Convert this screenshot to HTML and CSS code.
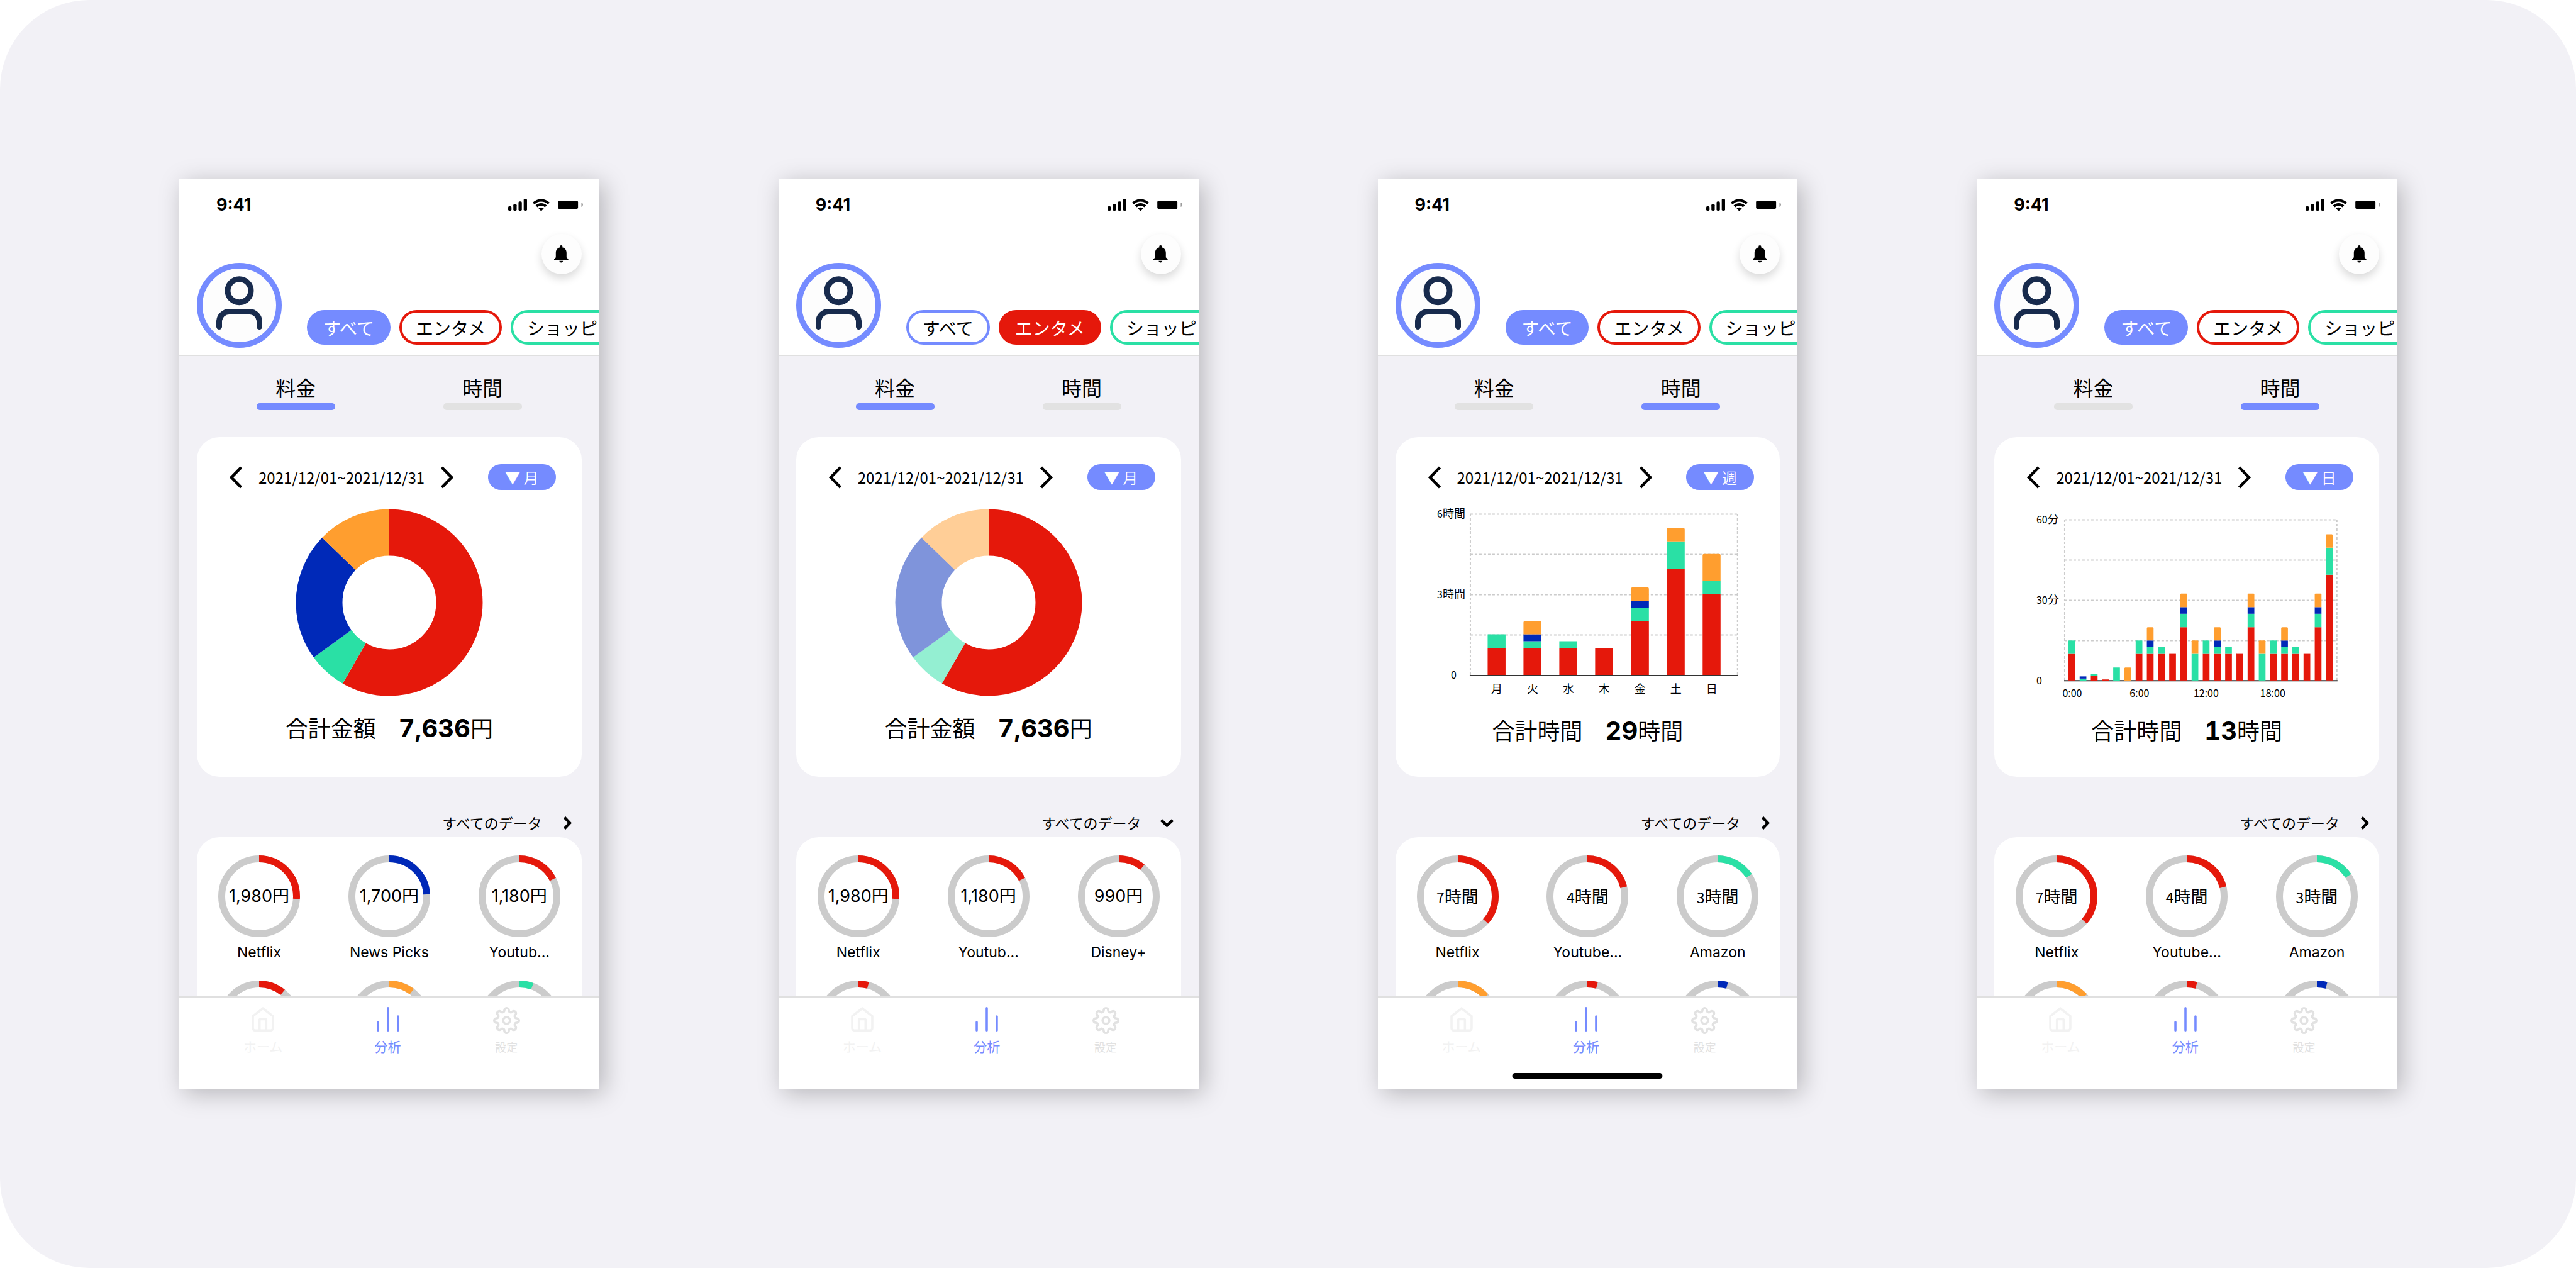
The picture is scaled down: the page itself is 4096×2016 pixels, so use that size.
FILE: index.html
```html
<!DOCTYPE html>
<html lang="ja">
<head>
<meta charset="utf-8">
<meta name="viewport" content="width=device-width, initial-scale=1">
<title>分析</title>
<link rel="stylesheet" href="styles.css">
</head>
<body>
<svg class="sprite" aria-hidden="true">
  <symbol id="signal" viewBox="0 0 153 97"><rect y="61" width="27" height="36" rx="9"/><rect x="42" y="43" width="27" height="54" rx="9"/><rect x="84" y="22" width="27" height="75" rx="9"/><rect x="126" width="27" height="97" rx="9"/></symbol>
  <symbol id="wifi" viewBox="-69 -98 138 99"><path d="M-61.5-61.5A87 87 0 0 1 61.5-61.5M-38-38A54 54 0 0 1 38-38" fill="none" stroke="currentColor" stroke-width="21"/><path d="M0 1-21-20A29 29 0 0 1 21-20Z"/></symbol>
  <symbol id="battery" viewBox="0 0 201 66"><rect width="162" height="66" rx="13"/><path d="M189 15a19 19 0 0 1 0 36z" fill="#9c9c9c"/></symbol>
  <symbol id="bell" viewBox="0 0 23 28"><circle cx="11.3" cy="2.3" r="2.2"/><path d="M11.3 3C6.500 3 2.800 6.700 2.800 12v7.200L0 22v1.200h22.600V22l-2.800-2.800V12c0-5.300-3.700-9-8.500-9zM8.400 24.700h5.800c-.3 1.700-1.500 2.800-2.900 2.800s-2.600-1.100-2.900-2.800z"/></symbol>
  <symbol id="person" viewBox="0 0 135 135"><circle cx="67.5" cy="67.5" r="63" fill="#fdfdfd" stroke="#758bff" stroke-width="9"/><g fill="none" stroke="#182b4d" stroke-width="9" stroke-linecap="round"><circle cx="67.5" cy="44.200" r="18.500"/><path d="M35.500 101.500v-8a16 16 0 0 1 16-16h32a16 16 0 0 1 16 16v8"/></g></symbol>
  <symbol id="prev" viewBox="0 0 20 36"><path d="M18.500 2 3 18l15.500 16" fill="none" stroke="currentColor" stroke-width="4.500"/></symbol>
  <symbol id="next" viewBox="0 0 20 36"><path d="M1.500 2 17 18 1.500 34" fill="none" stroke="currentColor" stroke-width="4.500"/></symbol>
  <symbol id="more" viewBox="0 0 21 21"><path d="m5.500 1.500 8.500 9-8.500 9" fill="none" stroke="currentColor" stroke-width="4.500"/></symbol>
  <symbol id="less" viewBox="0 0 21 21"><path d="m1.500 6 9 8.500 9-8.500" fill="none" stroke="currentColor" stroke-width="4.500"/></symbol>
  <symbol id="home" viewBox="0 0 20 22"><path d="M1 8.200 10 1.300l9 6.900V19a2 2 0 0 1-2 2H3a2 2 0 0 1-2-2zM7 21v-9.500a.5.5 0 0 1 .5-.5h5a.5.5 0 0 1 .5.5V21" fill="none" stroke="currentColor" stroke-width="2"/></symbol>
  <symbol id="stats" viewBox="0 0 20 22"><path d="M1 13.500V21M10 1v20M19 8.500V21" fill="none" stroke="currentColor" stroke-width="2" stroke-linecap="round"/></symbol>
  <symbol id="gear" viewBox="-12 -12 24 24"><g fill="none" stroke="currentColor" stroke-width="2"><circle r="3"/><path d="M-2-9A2 2 0 0 1 2-9A1.700 1.700 0 0 0 4.950-7.780A2 2 0 0 1 7.780-4.950A1.700 1.700 0 0 0 9-2A2 2 0 0 1 9 2A1.700 1.700 0 0 0 7.780 4.950A2 2 0 0 1 4.950 7.780A1.700 1.700 0 0 0 2 9A2 2 0 0 1-2 9A1.700 1.700 0 0 0-4.950 7.780A2 2 0 0 1-7.780 4.950A1.700 1.700 0 0 0-9 2A2 2 0 0 1-9-2A1.700 1.700 0 0 0-7.780-4.950A2 2 0 0 1-4.950-7.780A1.700 1.700 0 0 0-2-9z"/></g></symbol>
</svg>

<main class="board">

  <article class="phone">
    <header class="header">
      <div class="status"><time>9:41</time><span class="status-icons"><svg class="i-signal"><use href="#signal"/></svg><svg class="i-wifi"><use href="#wifi"/></svg><svg class="i-battery"><use href="#battery"/></svg></span></div>
      <div class="profile">
        <svg class="avatar" role="img" aria-label="プロフィール"><use href="#person"/></svg>
        <button class="bell" aria-label="通知"><svg><use href="#bell"/></svg></button>
        <div class="chips"><button class="chip blue on">すべて</button><button class="chip red">エンタメ</button><button class="chip green">ショッピング</button></div>
      </div>
    </header>
    <div class="tabs"><button class="tab active">料金</button><button class="tab">時間</button></div>
    <section class="card">
      <div class="range"><button class="arrow" aria-label="前へ"><svg><use href="#prev"/></svg></button><span class="dates">2021/12/01~2021/12/31</span><button class="arrow" aria-label="次へ"><svg><use href="#next"/></svg></button><select class="period" aria-label="期間"><option>▼ 月</option></select></div>
      <svg class="donut" viewBox="0 0 298 298" role="img" aria-label="料金の内訳">
        <g class="arcs"><circle class="s-red" cx="149" cy="149" r="111.500" pathLength="360" stroke-dasharray="210 360"/><circle class="s-green" cx="149" cy="149" r="111.500" pathLength="360" stroke-dasharray="24 360" stroke-dashoffset="-210"/><circle class="s-blue" cx="149" cy="149" r="111.500" pathLength="360" stroke-dasharray="80 360" stroke-dashoffset="-234"/><circle class="s-orange" cx="149" cy="149" r="111.500" pathLength="360" stroke-dasharray="46 360" stroke-dashoffset="-314"/></g>
      </svg>
      <p class="total"><span>合計金額　</span><b>7,636</b>円</p>
    </section>
    <button class="all">すべてのデータ<svg><use href="#more"/></svg></button>
    <div class="scroll">
      <ul class="services">
        <li><div class="ring"><svg viewBox="0 0 130 130"><circle cx="65" cy="65" r="59.500"/><circle class="s-red" cx="65" cy="65" r="59.500" pathLength="360" stroke-dasharray="94 360"/></svg><span class="yen">1,980円</span></div><span class="name">Netflix</span></li>
        <li><div class="ring"><svg viewBox="0 0 130 130"><circle cx="65" cy="65" r="59.500"/><circle class="s-blue" cx="65" cy="65" r="59.500" pathLength="360" stroke-dasharray="87 360"/></svg><span class="yen">1,700円</span></div><span class="name">News Picks</span></li>
        <li><div class="ring"><svg viewBox="0 0 130 130"><circle cx="65" cy="65" r="59.500"/><circle class="s-red" cx="65" cy="65" r="59.500" pathLength="360" stroke-dasharray="63 360"/></svg><span class="yen">1,180円</span></div><span class="name">Youtub...</span></li>
        <li><div class="ring"><svg viewBox="0 0 130 130"><circle cx="65" cy="65" r="59.500"/><circle class="s-red" cx="65" cy="65" r="59.500" pathLength="360" stroke-dasharray="39 360"/></svg></div></li>
        <li><div class="ring"><svg viewBox="0 0 130 130"><circle cx="65" cy="65" r="59.500"/><circle class="s-orange" cx="65" cy="65" r="59.500" pathLength="360" stroke-dasharray="37 360"/></svg></div></li>
        <li><div class="ring"><svg viewBox="0 0 130 130"><circle cx="65" cy="65" r="59.500"/><circle class="s-green" cx="65" cy="65" r="59.500" pathLength="360" stroke-dasharray="20 360"/></svg></div></li>
      </ul>
    </div>
    <nav class="nav"><a class="n-home" href="#home"><svg><use href="#home"/></svg>ホーム</a><a class="n-stats" href="#stats"><svg><use href="#stats"/></svg>分析</a><a class="n-gear" href="#gear"><svg><use href="#gear"/></svg>設定</a></nav>
  </article>

  <article class="phone">
    <header class="header">
      <div class="status"><time>9:41</time><span class="status-icons"><svg class="i-signal"><use href="#signal"/></svg><svg class="i-wifi"><use href="#wifi"/></svg><svg class="i-battery"><use href="#battery"/></svg></span></div>
      <div class="profile">
        <svg class="avatar" role="img" aria-label="プロフィール"><use href="#person"/></svg>
        <button class="bell" aria-label="通知"><svg><use href="#bell"/></svg></button>
        <div class="chips"><button class="chip blue">すべて</button><button class="chip red on">エンタメ</button><button class="chip green">ショッピング</button></div>
      </div>
    </header>
    <div class="tabs"><button class="tab active">料金</button><button class="tab">時間</button></div>
    <section class="card">
      <div class="range"><button class="arrow" aria-label="前へ"><svg><use href="#prev"/></svg></button><span class="dates">2021/12/01~2021/12/31</span><button class="arrow" aria-label="次へ"><svg><use href="#next"/></svg></button><select class="period" aria-label="期間"><option>▼ 月</option></select></div>
      <svg class="donut" viewBox="0 0 298 298" role="img" aria-label="料金の内訳">
        <g class="arcs"><circle class="s-red" cx="149" cy="149" r="111.500" pathLength="360" stroke-dasharray="210 360"/><circle class="s-green faded" cx="149" cy="149" r="111.500" pathLength="360" stroke-dasharray="24 360" stroke-dashoffset="-210"/><circle class="s-blue faded" cx="149" cy="149" r="111.500" pathLength="360" stroke-dasharray="80 360" stroke-dashoffset="-234"/><circle class="s-orange faded" cx="149" cy="149" r="111.500" pathLength="360" stroke-dasharray="46 360" stroke-dashoffset="-314"/></g>
      </svg>
      <p class="total"><span>合計金額　</span><b>7,636</b>円</p>
    </section>
    <button class="all">すべてのデータ<svg><use href="#less"/></svg></button>
    <div class="scroll">
      <ul class="services">
        <li><div class="ring"><svg viewBox="0 0 130 130"><circle cx="65" cy="65" r="59.500"/><circle class="s-red" cx="65" cy="65" r="59.500" pathLength="360" stroke-dasharray="94 360"/></svg><span class="yen">1,980円</span></div><span class="name">Netflix</span></li>
        <li><div class="ring"><svg viewBox="0 0 130 130"><circle cx="65" cy="65" r="59.500"/><circle class="s-red" cx="65" cy="65" r="59.500" pathLength="360" stroke-dasharray="63 360"/></svg><span class="yen">1,180円</span></div><span class="name">Youtub...</span></li>
        <li><div class="ring"><svg viewBox="0 0 130 130"><circle cx="65" cy="65" r="59.500"/><circle class="s-red" cx="65" cy="65" r="59.500" pathLength="360" stroke-dasharray="39 360"/></svg><span class="yen">990円</span></div><span class="name">Disney+</span></li>
        <li><div class="ring"><svg viewBox="0 0 130 130"><circle cx="65" cy="65" r="59.500"/><circle class="s-red" cx="65" cy="65" r="59.500" pathLength="360" stroke-dasharray="15 360"/></svg></div></li>
      </ul>
    </div>
    <nav class="nav"><a class="n-home" href="#home"><svg><use href="#home"/></svg>ホーム</a><a class="n-stats" href="#stats"><svg><use href="#stats"/></svg>分析</a><a class="n-gear" href="#gear"><svg><use href="#gear"/></svg>設定</a></nav>
  </article>

  <article class="phone">
    <header class="header">
      <div class="status"><time>9:41</time><span class="status-icons"><svg class="i-signal"><use href="#signal"/></svg><svg class="i-wifi"><use href="#wifi"/></svg><svg class="i-battery"><use href="#battery"/></svg></span></div>
      <div class="profile">
        <svg class="avatar" role="img" aria-label="プロフィール"><use href="#person"/></svg>
        <button class="bell" aria-label="通知"><svg><use href="#bell"/></svg></button>
        <div class="chips"><button class="chip blue on">すべて</button><button class="chip red">エンタメ</button><button class="chip green">ショッピング</button></div>
      </div>
    </header>
    <div class="tabs"><button class="tab">料金</button><button class="tab active">時間</button></div>
    <section class="card">
      <div class="range"><button class="arrow" aria-label="前へ"><svg><use href="#prev"/></svg></button><span class="dates">2021/12/01~2021/12/31</span><button class="arrow" aria-label="次へ"><svg><use href="#next"/></svg></button><select class="period" aria-label="期間"><option>▼ 週</option></select></div>
      <svg class="bars" viewBox="0 0 612 310" role="img" aria-label="曜日ごとの利用時間">
        <path class="grid" d="M119 16.500H544M119 80.500H544M119 144.500H544M119 208.500H544M119 16V272M544 16V272"/>
        <path class="axis" d="M118 273H545"/>
        <path class="f-red" d="M146.500 229H175V272H146.500zM203.500 229H232V272H203.500zM260.500 229H289V272H260.500zM317.500 229H346V272H317.500zM374.500 186.500H403V272H374.500zM431.500 103H460V272H431.500zM488.500 144H517V272H488.500z"/>
        <path class="f-green" d="M146.500 207.600H175V229H146.500zM203.500 218.500H232V229H203.500zM260.500 218.500H289V229H260.500zM374.500 165H403V186.500H374.500zM431.500 59.700H460V103H431.500zM488.500 122.600H517V144H488.500z"/>
        <path class="f-blue" d="M203.500 207.600H232V218.500H203.500zM374.500 154.500H403V165H374.500z"/>
        <path class="f-orange" d="M203.500 207.600V188.500q0-2 2-2H230q2 0 2 2V207.600zM374.500 154.500V135q0-2 2-2H401q2 0 2 2V154.500zM431.500 59.700V40.500q0-2 2-2H458q2 0 2 2V59.700zM488.500 122.600V81.700q0-2 2-2H515q2 0 2 2V122.600z"/>
        <g text-anchor="end"><text x="111" y="22">6<tspan class="kanji">時間</tspan></text><text x="111" y="150">3<tspan class="kanji">時間</tspan></text><text x="97" y="278">0</text></g>
        <g class="kanji" text-anchor="middle"><text x="161" y="301">月</text><text x="218" y="301">火</text><text x="275" y="301">水</text><text x="332" y="301">木</text><text x="389" y="301">金</text><text x="446" y="301">土</text><text x="503" y="301">日</text></g>
      </svg>
      <p class="total">合計時間　<b>29</b>時間</p>
    </section>
    <button class="all">すべてのデータ<svg><use href="#more"/></svg></button>
    <div class="scroll">
      <ul class="services">
        <li><div class="ring"><svg viewBox="0 0 130 130"><circle cx="65" cy="65" r="59.500"/><circle class="s-red" cx="65" cy="65" r="59.500" pathLength="360" stroke-dasharray="132 360"/></svg><span class="hours">7<span>時間</span></span></div><span class="name">Netflix</span></li>
        <li><div class="ring"><svg viewBox="0 0 130 130"><circle cx="65" cy="65" r="59.500"/><circle class="s-red" cx="65" cy="65" r="59.500" pathLength="360" stroke-dasharray="76 360"/></svg><span class="hours">4<span>時間</span></span></div><span class="name">Youtube...</span></li>
        <li><div class="ring"><svg viewBox="0 0 130 130"><circle cx="65" cy="65" r="59.500"/><circle class="s-green" cx="65" cy="65" r="59.500" pathLength="360" stroke-dasharray="57 360"/></svg><span class="hours">3<span>時間</span></span></div><span class="name">Amazon</span></li>
        <li><div class="ring"><svg viewBox="0 0 130 130"><circle cx="65" cy="65" r="59.500"/><circle class="s-orange" cx="65" cy="65" r="59.500" pathLength="360" stroke-dasharray="48 360"/></svg></div></li>
        <li><div class="ring"><svg viewBox="0 0 130 130"><circle cx="65" cy="65" r="59.500"/><circle class="s-red" cx="65" cy="65" r="59.500" pathLength="360" stroke-dasharray="15 360"/></svg></div></li>
        <li><div class="ring"><svg viewBox="0 0 130 130"><circle cx="65" cy="65" r="59.500"/><circle class="s-blue" cx="65" cy="65" r="59.500" pathLength="360" stroke-dasharray="15 360"/></svg></div></li>
      </ul>
    </div>
    <nav class="nav"><a class="n-home" href="#home"><svg><use href="#home"/></svg>ホーム</a><a class="n-stats" href="#stats"><svg><use href="#stats"/></svg>分析</a><a class="n-gear" href="#gear"><svg><use href="#gear"/></svg>設定</a></nav>
    <span class="indicator"></span>
  </article>

  <article class="phone">
    <header class="header">
      <div class="status"><time>9:41</time><span class="status-icons"><svg class="i-signal"><use href="#signal"/></svg><svg class="i-wifi"><use href="#wifi"/></svg><svg class="i-battery"><use href="#battery"/></svg></span></div>
      <div class="profile">
        <svg class="avatar" role="img" aria-label="プロフィール"><use href="#person"/></svg>
        <button class="bell" aria-label="通知"><svg><use href="#bell"/></svg></button>
        <div class="chips"><button class="chip blue on">すべて</button><button class="chip red">エンタメ</button><button class="chip green">ショッピング</button></div>
      </div>
    </header>
    <div class="tabs"><button class="tab">料金</button><button class="tab active">時間</button></div>
    <section class="card">
      <div class="range"><button class="arrow" aria-label="前へ"><svg><use href="#prev"/></svg></button><span class="dates">2021/12/01~2021/12/31</span><button class="arrow" aria-label="次へ"><svg><use href="#next"/></svg></button><select class="period" aria-label="期間"><option>▼ 日</option></select></div>
      <svg class="bars" viewBox="0 0 612 310" role="img" aria-label="時刻ごとの利用時間">
        <defs>
          <g id="h2"><path class="f-red" d="M0 238.700h10.700V281H0z"/><path class="f-green" d="M0 217.400h10.700v21.300H0z"/></g>
          <g id="h4"><path class="f-red" d="M0 238.700h10.700V281H0z"/><path class="f-green" d="M0 228h10.700v10.700H0z"/><path class="f-blue" d="M0 217.400h10.700V228H0z"/><path class="f-orange" d="M0 217.400V197.300l1-1h8.700l1 1v20.100z"/></g>
          <g id="h3"><path class="f-red" d="M0 238.700h10.700V281H0z"/><path class="f-green" d="M0 228h10.700v10.700H0z"/></g>
          <g id="h1"><path class="f-red" d="M0 238.700h10.700V281H0z"/></g>
          <g id="h5"><path class="f-red" d="M0 196.300h10.700V281H0z"/><path class="f-green" d="M0 174.900h10.700v21.400H0z"/><path class="f-blue" d="M0 164.400h10.700v10.500H0z"/><path class="f-orange" d="M0 164.400V143.900l1-1h8.700l1 1v20.500z"/></g>
          <g id="h6"><path class="f-green" d="M0 238.700h10.700V281H0z"/><path class="f-orange" d="M0 238.700V218.400l1-1h8.700l1 1v20.300z"/></g>
        </defs>
        <path class="grid" d="M112 25.500H545M112 89.500H545M112 153.500H545M112 217.500H545M112 25V281M545 25V281"/>
        <path class="axis" d="M111 281.500H546"/>
        <use href="#h2" x="118"/>
        <path class="f-green" d="M135.800 278h10.700v3.500h-10.700z"/><path class="f-blue" d="M135.800 274.500h10.700v3.500h-10.700z"/>
        <path class="f-red" d="M153.600 273.400h10.700v8h-10.700zM171.400 279.500h10.700v2h-10.700z"/><path class="f-green" d="M153.600 271.200h10.700v2.200h-10.700zM189.200 260.300h10.700v21h-10.700z"/>
        <path class="f-orange" d="M207 281.300V261.300l1-1h8.700l1 1v20z"/>
        <use href="#h2" x="224.900"/><use href="#h4" x="242.700"/><use href="#h3" x="260.500"/><use href="#h1" x="278.300"/><use href="#h5" x="296.100"/><use href="#h6" x="313.900"/>
        <use href="#h2" x="331.700"/><use href="#h4" x="349.500"/><use href="#h3" x="367.300"/><use href="#h1" x="385.200"/><use href="#h5" x="403"/><use href="#h6" x="420.800"/>
        <use href="#h2" x="438.600"/><use href="#h4" x="456.400"/><use href="#h3" x="474.200"/><use href="#h1" x="492"/><use href="#h5" x="509.800"/>
        <path class="f-red" d="M527.600 112.800h10.700V281h-10.700z"/><path class="f-green" d="M527.600 69.900h10.700v42.900h-10.700z"/><path class="f-orange" d="M527.600 69.900V49.400l1-1h8.700l1 1v20.500z"/>
        <text x="67" y="31">60<tspan class="kanji">分</tspan></text><text x="67" y="159">30<tspan class="kanji">分</tspan></text><text x="67" y="287">0</text>
        <g text-anchor="middle"><text x="124" y="307">0:00</text><text x="231" y="307">6:00</text><text x="337" y="307">12:00</text><text x="443" y="307">18:00</text></g>
      </svg>
      <p class="total">合計時間　<b>13</b>時間</p>
    </section>
    <button class="all">すべてのデータ<svg><use href="#more"/></svg></button>
    <div class="scroll">
      <ul class="services">
        <li><div class="ring"><svg viewBox="0 0 130 130"><circle cx="65" cy="65" r="59.500"/><circle class="s-red" cx="65" cy="65" r="59.500" pathLength="360" stroke-dasharray="132 360"/></svg><span class="hours">7<span>時間</span></span></div><span class="name">Netflix</span></li>
        <li><div class="ring"><svg viewBox="0 0 130 130"><circle cx="65" cy="65" r="59.500"/><circle class="s-red" cx="65" cy="65" r="59.500" pathLength="360" stroke-dasharray="76 360"/></svg><span class="hours">4<span>時間</span></span></div><span class="name">Youtube...</span></li>
        <li><div class="ring"><svg viewBox="0 0 130 130"><circle cx="65" cy="65" r="59.500"/><circle class="s-green" cx="65" cy="65" r="59.500" pathLength="360" stroke-dasharray="57 360"/></svg><span class="hours">3<span>時間</span></span></div><span class="name">Amazon</span></li>
        <li><div class="ring"><svg viewBox="0 0 130 130"><circle cx="65" cy="65" r="59.500"/><circle class="s-orange" cx="65" cy="65" r="59.500" pathLength="360" stroke-dasharray="48 360"/></svg></div></li>
        <li><div class="ring"><svg viewBox="0 0 130 130"><circle cx="65" cy="65" r="59.500"/><circle class="s-red" cx="65" cy="65" r="59.500" pathLength="360" stroke-dasharray="15 360"/></svg></div></li>
        <li><div class="ring"><svg viewBox="0 0 130 130"><circle cx="65" cy="65" r="59.500"/><circle class="s-blue" cx="65" cy="65" r="59.500" pathLength="360" stroke-dasharray="15 360"/></svg></div></li>
      </ul>
    </div>
    <nav class="nav"><a class="n-home" href="#home"><svg><use href="#home"/></svg>ホーム</a><a class="n-stats" href="#stats"><svg><use href="#stats"/></svg>分析</a><a class="n-gear" href="#gear"><svg><use href="#gear"/></svg>設定</a></nav>
  </article>

</main>
</body>
</html>
```

FILE: styles.css
```css
:root {
  --blue: #758bff;
  --red: #e5180b;
  --green: #2ae0a5;
  --navy: #0029b8;
  --orange: #ff9e2f;
  --page: #f2f1f6;
}

* { box-sizing: border-box; }

body {
  margin: 0;
  background: #fff;
  color: #000;
  font-family: "Noto Sans CJK JP", sans-serif;
}

button, select {
  margin: 0;
  padding: 0;
  border: 0;
  background: none;
  color: inherit;
  font: inherit;
}

svg { display: block; flex: none; }
.sprite { position: absolute; width: 0; height: 0; }

.board {
  display: grid;
  grid-template-columns: repeat(4, minmax(0, 1fr));
  gap: 285px;
  align-items: center;
  min-height: 100vh;
  padding: 0 285px;
  border-radius: 142px;
  background: var(--page);
}

.phone {
  position: relative;
  display: flex;
  flex-direction: column;
  min-height: 0;
  aspect-ratio: 334 / 723;
  background: var(--page);
  box-shadow: 7px 7px 36px rgba(0, 0, 0, .25);
}

/* header */
.header {
  flex: none;
  border-bottom: 2px solid #e0e0e0;
  background: #fff;
}

.status {
  display: flex;
  align-items: center;
  justify-content: space-between;
  height: 81px;
  padding: 0 26px 0 59px;
  font: 700 27px/32px Inter, sans-serif;
}
.status-icons { display: flex; align-items: center; }
.i-signal { width: 30px; height: 19px; margin-right: 9px; }
.i-wifi { width: 27px; height: 20px; margin-right: 13px; }
.i-battery { width: 40px; height: 13px; }

.profile {
  display: grid;
  grid-template-columns: 135px minmax(0, 1fr);
  grid-template-rows: 64px 60px;
  gap: 57px 40px;
  padding: 6px 0 11px 28px;
}
.avatar {
  grid-row: 1 / 3;
  align-self: end;
  width: 135px;
  height: 135px;
}
.bell {
  display: grid;
  place-items: center;
  justify-self: end;
  width: 64px;
  height: 64px;
  margin-right: 28px;
  border-radius: 50%;
  background: #fdfdfd;
  box-shadow: 0 7px 14px rgba(0, 0, 0, .15);
}
.bell svg { width: 23px; height: 28px; }

.chips {
  display: flex;
  gap: 14px;
  align-items: flex-start;
  overflow: hidden;
}
.chip {
  flex: none;
  height: 55px;
  padding: 0 22px;
  border: 4px solid var(--c);
  border-radius: 28px;
  font-size: 28px;
  line-height: 40px;
}
.chip.on { background: var(--c); color: #fff; }
.chip.blue { --c: var(--blue); }
.chip.red { --c: var(--red); }
.chip.green { --c: var(--green); }

/* tabs */
.tabs {
  display: flex;
  flex: none;
  justify-content: center;
  gap: 172px;
  padding: 27px 0 43px;
}
.tab { width: 125px; font-size: 32px; line-height: 44px; }
.tab::after {
  display: block;
  height: 11px;
  margin-top: 4px;
  border-radius: 5px;
  background: #e2e2e2;
  content: "";
}
.tab.active::after { background: var(--blue); }

/* summary card */
.card {
  flex: none;
  min-height: 540px;
  margin: 0 28px;
  padding-top: 43px;
  border-radius: 36px;
  background: #fff;
}
.range {
  display: flex;
  align-items: center;
  height: 41px;
  padding: 0 41px 0 52px;
}
.arrow svg { width: 20px; height: 36px; }
.dates { margin: 0 26px; font-size: 24px; line-height: 36px; }
.period {
  width: 108px;
  height: 41px;
  margin-left: auto;
  border-radius: 21px;
  background: var(--blue);
  color: #fff;
  font-size: 24px;
  font-weight: 350;
  text-align: center;
  text-align-last: center;
  appearance: none;
}

.donut { width: 298px; height: 298px; margin: 30px auto 0; }
.arcs { fill: none; stroke-width: 74; transform: rotate(-90deg); transform-origin: center; }
.faded { opacity: .5; }
.s-red { stroke: var(--red); }
.s-green { stroke: var(--green); }
.s-blue { stroke: var(--navy); }
.s-orange { stroke: var(--orange); }

.bars { width: 100%; margin-top: 22px; font-size: 16px; }
.kanji { font-size: 18px; }
.f-red { fill: var(--red); }
.f-green { fill: var(--green); }
.f-blue { fill: var(--navy); }
.f-orange { fill: var(--orange); }
.grid { fill: none; stroke: #ccc; stroke-width: 2; stroke-dasharray: 4 3; }
.axis { stroke: #333; stroke-width: 2; }

.total {
  margin: 23px 0 0;
  font-size: 36px;
  font-weight: 350;
  line-height: 52px;
  text-align: center;
}
.total span { font-weight: 400; }
.total b {
  font-family: Inter, sans-serif;
  font-size: 40px;
  font-weight: 700;
  font-feature-settings: "tnum";
  line-height: 1;
}

/* service list */
.all {
  display: flex;
  flex: none;
  align-items: center;
  align-self: flex-end;
  gap: 30px;
  height: 42px;
  margin: 52px 40px 2px 0;
  font-size: 23px;
  line-height: 34px;
}
.all svg { width: 21px; height: 21px; }

.scroll {
  flex: 1 1 0;
  min-height: 0;
  margin: 0 28px;
  overflow: hidden;
  border-radius: 36px 36px 0 0;
  background: #fff;
}
.services {
  display: grid;
  grid-template-columns: repeat(3, 130px);
  grid-auto-rows: 170px;
  justify-content: space-between;
  gap: 29px 0;
  margin: 0;
  padding: 29px 34px;
  list-style: none;
}
.services li { display: flex; flex-direction: column; align-items: center; }
.ring { display: grid; place-items: center; }
.ring > * { grid-area: 1 / 1; }
.ring svg {
  width: 130px;
  height: 130px;
  fill: none;
  stroke: #cbcbcb;
  stroke-width: 11;
  transform: rotate(-90deg);
}
.yen { font-family: Inter, "Noto Sans CJK JP", sans-serif; font-size: 27px; line-height: 32px; }
.hours { font-size: 23px; line-height: 40px; }
.hours span { font-size: 27px; }
.name {
  margin-top: 8px;
  font-family: Inter, sans-serif;
  font-size: 23px;
  line-height: 32px;
  white-space: nowrap;
}

/* bottom bar */
.nav {
  display: flex;
  flex: none;
  align-items: flex-start;
  justify-content: space-between;
  height: 147px;
  padding: 15px 126px 0 102px;
  border-top: 2px solid #e0e0e0;
  background: #fff;
}
.nav a {
  display: flex;
  flex-direction: column;
  align-items: center;
  gap: 8px;
  font-size: 21px;
  line-height: 30px;
  text-decoration: none;
}
.nav svg { width: 36px; height: 39px; }
.nav .n-home { color: #f2f2f2; }
.nav .n-stats { color: var(--blue); }
.nav .n-gear { gap: 5px; color: #e2e2e2; font-size: 18px; }
.n-gear svg { width: 43px; height: 43px; }

.indicator {
  position: absolute;
  bottom: 16px;
  left: 50%;
  width: 239px;
  height: 9px;
  border-radius: 5px;
  background: #000;
  transform: translateX(-50%);
}
```
